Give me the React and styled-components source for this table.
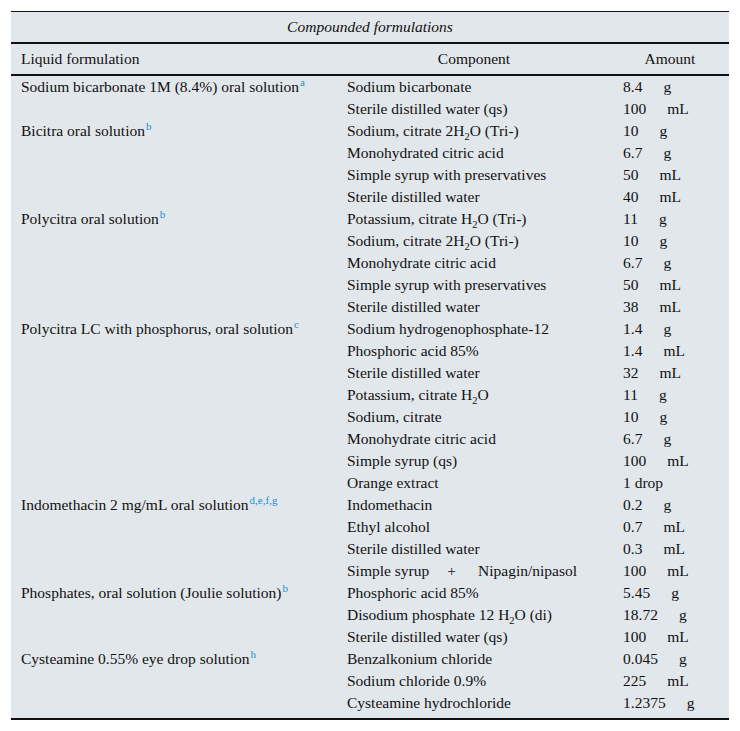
import React from 'react'
import styled, { createGlobalStyle } from 'styled-components'

const GlobalStyle = createGlobalStyle`
  html, body {
    margin: 0;
    padding: 0;
    background: #ffffff;
  }
  body {
    font-family: "Liberation Serif", "Times New Roman", serif;
    color: #111;
  }
`

const Page = styled.div`
  padding: 11px 0 0 11px;
`

const Table = styled.div`
  width: 718px;
  background: #e2e7eb;
  border-top: 1px solid #111;
  border-bottom: 2px solid #111;
  font-family: "Liberation Serif", "Times New Roman", serif;
  font-size: 15.5px;
  color: #111;
  padding-bottom: 4px;
`

const Caption = styled.div`
  height: 30px;
  line-height: 30px;
  text-align: center;
  font-style: italic;
  border-bottom: 2px solid #111;
`

const Grid = styled.div`
  display: grid;
  grid-template-columns: 326px 276px 116px;
`

const HeadCell = styled.div`
  height: 30px;
  line-height: 30px;
  text-align: ${({ $center }) => ($center ? 'center' : 'left')};
  padding-left: 10px;
  padding-right: ${({ $center }) => ($center ? '12px' : '0')};
  border-bottom: 2px solid #111;
`

const Cell = styled.div`
  height: 22px;
  line-height: 22px;
  padding-left: 10px;
  white-space: nowrap;
`

const Sup = styled.sup`
  font-size: 11px;
  color: #1b8fd6;
  vertical-align: 6px;
  line-height: 0;
  margin-left: 1px;
`

const Sub = styled.sub`
  font-size: 10.5px;
  vertical-align: -4px;
  line-height: 0;
`

const Num = styled.span``

const Unit = styled.span`
  margin-left: 21px;
`

const Wide = styled.span`
  margin: 0 22px 0 18px;
`

const H2O = ({ pre = '' }) => (
  <>
    {pre}H<Sub>2</Sub>O
  </>
)

const groups = [
  {
    name: 'Sodium bicarbonate 1M (8.4%) oral solution',
    note: 'a',
    items: [
      ['Sodium bicarbonate', '8.4', 'g'],
      ['Sterile distilled water (qs)', '100', 'mL'],
    ],
  },
  {
    name: 'Bicitra oral solution',
    note: 'b',
    items: [
      [<>Sodium, citrate <H2O pre="2" /> (Tri-)</>, '10', 'g'],
      ['Monohydrated citric acid', '6.7', 'g'],
      ['Simple syrup with preservatives', '50', 'mL'],
      ['Sterile distilled water', '40', 'mL'],
    ],
  },
  {
    name: 'Polycitra oral solution',
    note: 'b',
    items: [
      [<>Potassium, citrate <H2O /> (Tri-)</>, '11', 'g'],
      [<>Sodium, citrate <H2O pre="2" /> (Tri-)</>, '10', 'g'],
      ['Monohydrate citric acid', '6.7', 'g'],
      ['Simple syrup with preservatives', '50', 'mL'],
      ['Sterile distilled water', '38', 'mL'],
    ],
  },
  {
    name: 'Polycitra LC with phosphorus, oral solution',
    note: 'c',
    items: [
      ['Sodium hydrogenophosphate-12', '1.4', 'g'],
      ['Phosphoric acid 85%', '1.4', 'mL'],
      ['Sterile distilled water', '32', 'mL'],
      [<>Potassium, citrate <H2O /></>, '11', 'g'],
      ['Sodium, citrate', '10', 'g'],
      ['Monohydrate citric acid', '6.7', 'g'],
      ['Simple syrup (qs)', '100', 'mL'],
      ['Orange extract', '1 drop', null],
    ],
  },
  {
    name: 'Indomethacin 2 mg/mL oral solution',
    note: 'd,e,f,g',
    items: [
      ['Indomethacin', '0.2', 'g'],
      ['Ethyl alcohol', '0.7', 'mL'],
      ['Sterile distilled water', '0.3', 'mL'],
      [<>Simple syrup<Wide>+</Wide>Nipagin/nipasol</>, '100', 'mL'],
    ],
  },
  {
    name: 'Phosphates, oral solution (Joulie solution)',
    note: 'b',
    items: [
      ['Phosphoric acid 85%', '5.45', 'g'],
      [<>Disodium phosphate 12 <H2O /> (di)</>, '18.72', 'g'],
      ['Sterile distilled water (qs)', '100', 'mL'],
    ],
  },
  {
    name: 'Cysteamine 0.55% eye drop solution',
    note: 'h',
    items: [
      ['Benzalkonium chloride', '0.045', 'g'],
      ['Sodium chloride 0.9%', '225', 'mL'],
      ['Cysteamine hydrochloride', '1.2375', 'g'],
    ],
  },
]

export default function App() {
  return (
    <Page>
      <GlobalStyle />
      <Table>
        <Caption>Compounded formulations</Caption>
        <Grid>
          <HeadCell>Liquid formulation</HeadCell>
          <HeadCell $center>Component</HeadCell>
          <HeadCell $center>Amount</HeadCell>
          {groups.map((g, gi) =>
            g.items.map(([comp, num, unit], i) => (
              <React.Fragment key={`${gi}-${i}`}>
                <Cell>
                  {i === 0 && (
                    <>
                      {g.name}
                      <Sup>{g.note}</Sup>
                    </>
                  )}
                </Cell>
                <Cell>{comp}</Cell>
                <Cell>
                  <Num>{num}</Num>
                  {unit && <Unit>{unit}</Unit>}
                </Cell>
              </React.Fragment>
            ))
          )}
        </Grid>
      </Table>
    </Page>
  )
}
